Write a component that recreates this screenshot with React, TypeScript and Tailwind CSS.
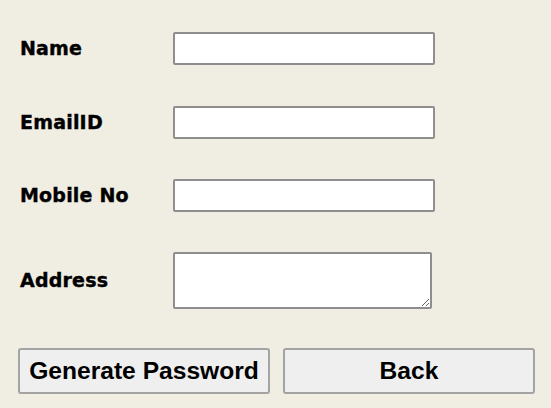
export default function App() {
  const fields = [
    { label: 'Name', top: 'mt-[32px]' },
    { label: 'EmailID', top: 'mt-[41px]' },
    { label: 'Mobile No', top: 'mt-[40px]' },
  ]

  return (
    <div className="w-[551px] h-[408px] bg-[#f0ede3] overflow-hidden">
      <div className="flex flex-col pl-[20px]">
        {fields.map(f => (
          <div key={f.label} className={`flex items-center ${f.top}`}>
            <label className="w-[153px] font-['DejaVu_Sans',sans-serif] font-bold text-[19px] tracking-[0.2px] text-black [-webkit-text-stroke:0.4px_black]">
              {f.label}
            </label>
            <input
              type="text"
              className="w-[262px] h-[33px] bg-white border-2 border-[#8e8e8e] rounded-[2px] outline-none"
            />
          </div>
        ))}
        <div className="flex items-center mt-[40px]">
          <label className="w-[153px] font-['DejaVu_Sans',sans-serif] font-bold text-[19px] tracking-[0.2px] text-black [-webkit-text-stroke:0.4px_black]">
            Address
          </label>
          <textarea className="w-[259px] h-[57px] bg-white border-2 border-[#8e8e8e] rounded-[2px] outline-none" />
        </div>
      </div>
      <div className="flex gap-[13px] pl-[18px] mt-[39px]">
        {['Generate Password', 'Back'].map(b => (
          <button
            key={b}
            className="w-[252px] h-[46px] bg-[#efefef] border-2 border-[#a3a3a3] rounded-[3px] font-['Liberation_Sans',Arial,sans-serif] font-bold text-[24.6px] text-black"
          >
            {b}
          </button>
        ))}
      </div>
    </div>
  )
}
